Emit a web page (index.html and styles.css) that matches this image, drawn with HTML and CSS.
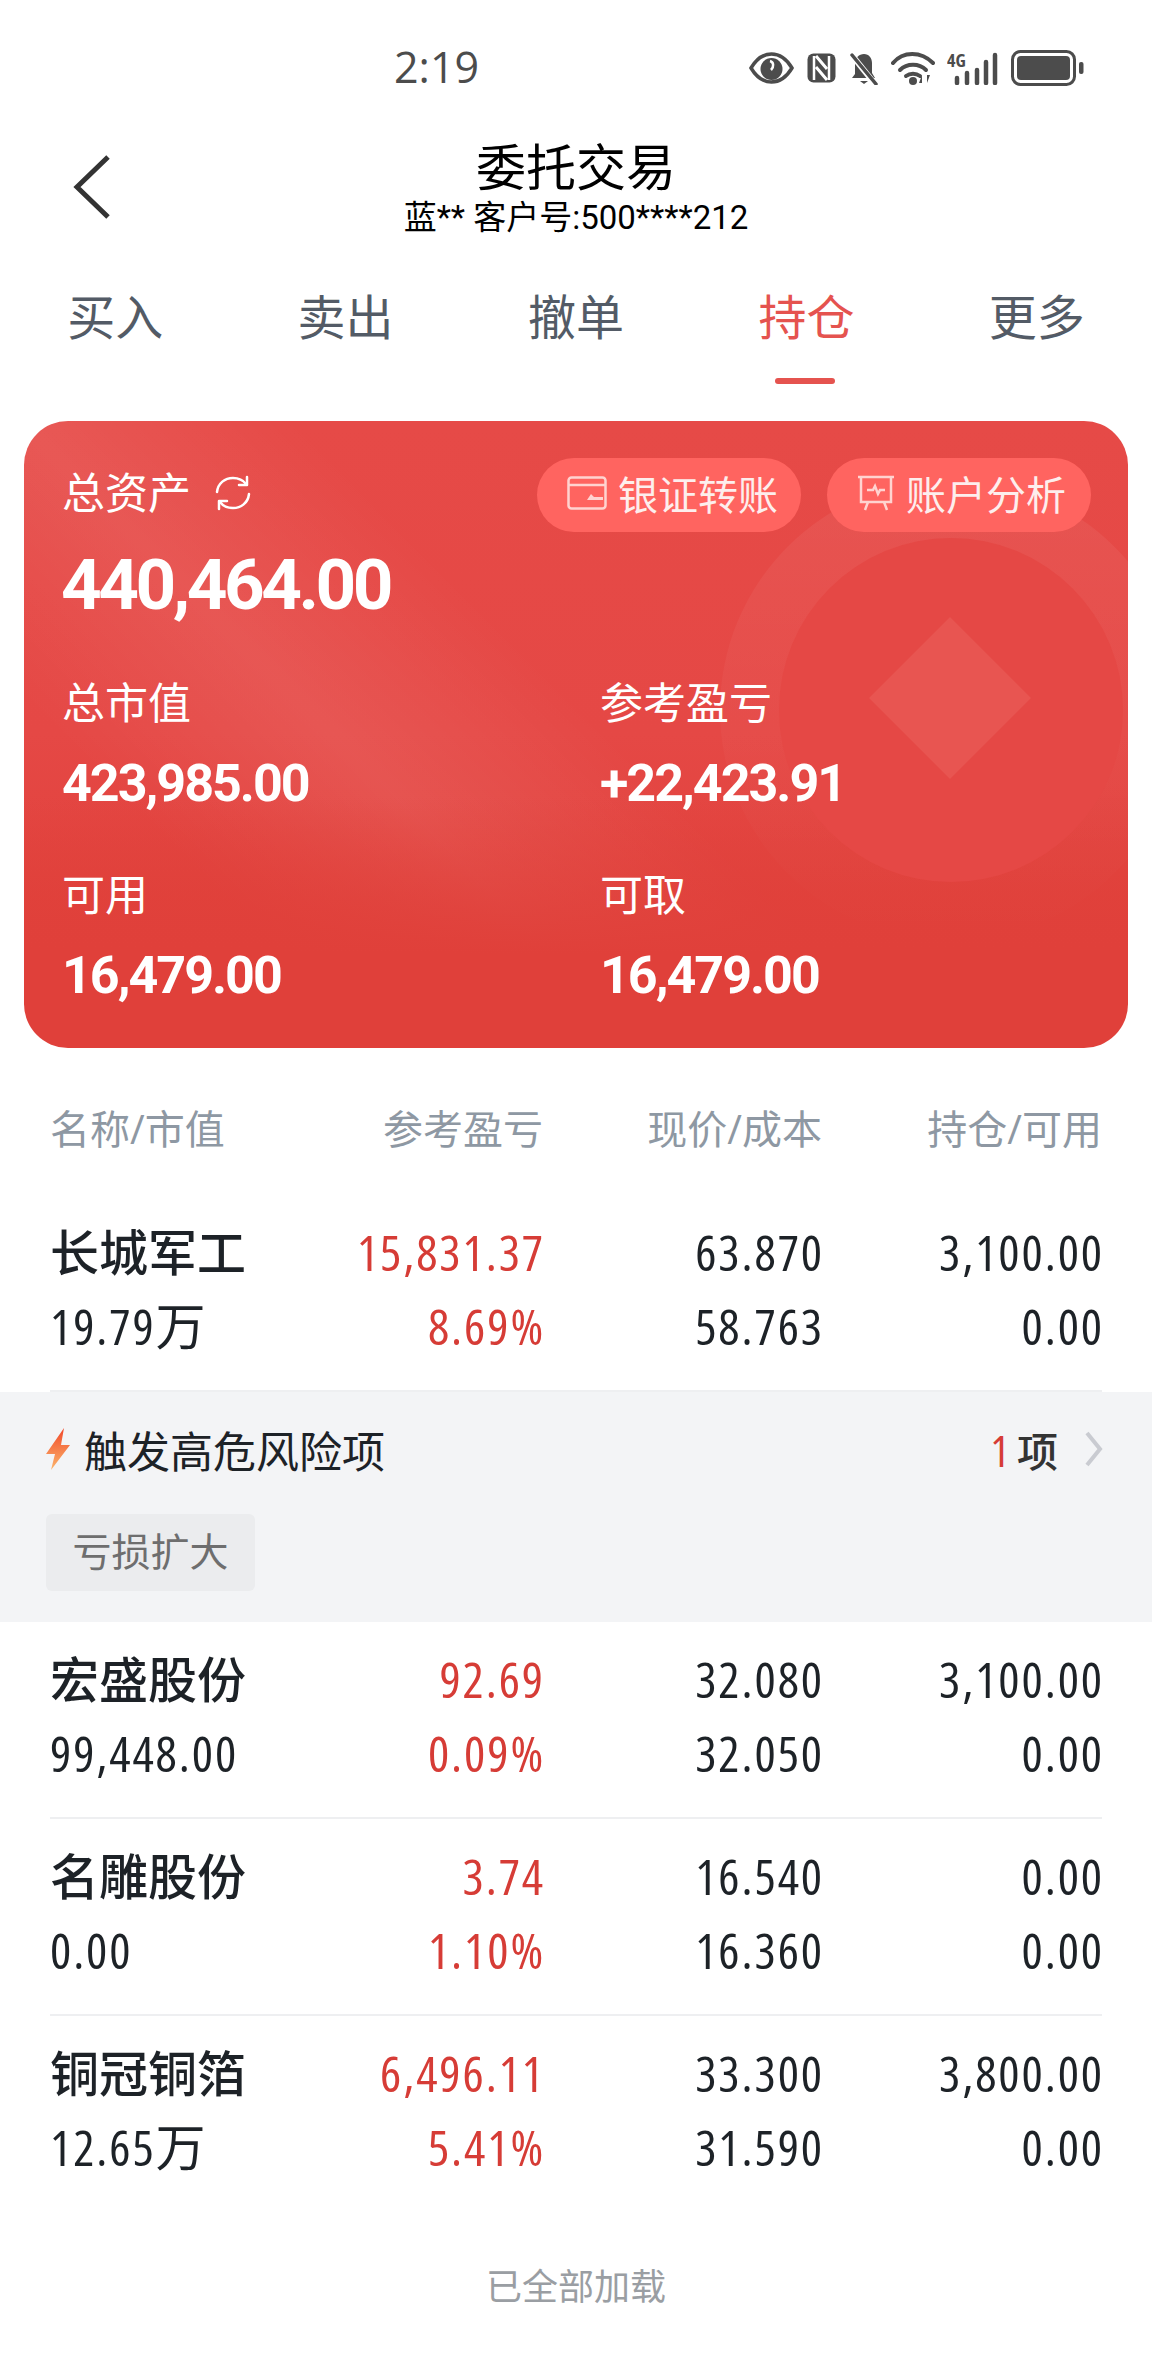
FILE: index.html
```html
<!DOCTYPE html>
<html>
<head>
<meta charset="utf-8">
<link rel="stylesheet" href="styles.css">
</head>
<body>

<div class="status">
  <span class="time">2:19</span>
  <div class="status-icons">
    <svg width="45" height="32" viewBox="0 0 45 32"><path d="M2 16C8 6 14 2 22.500 2S37 6 43 16C37 26 31 30 22.500 30S8 26 2 16Z" fill="none" stroke="#4c4c4c" stroke-width="3.500"/><circle cx="22.500" cy="17" r="11" fill="#4c4c4c"/><path d="M21 9c4 1 4 6 1 9" fill="none" stroke="#fff" stroke-width="2.500"/></svg>
    <svg width="31" height="32" viewBox="0 0 31 32"><rect x="1.500" y="1.500" width="28" height="29" rx="6" fill="#4c4c4c"/><path d="M8 4v24M23 4v24" stroke="#fff" stroke-width="2.500"/><path d="M10 4l11 13M10 15l11 13" stroke="#fff" stroke-width="3"/></svg>
    <svg width="30" height="34" viewBox="0 0 30 34"><path d="M15 3c5 0 8 4 8 9v10l3 5H3l3-4V12c0-5 4-9 9-9Z" fill="#4c4c4c"/><path d="M11 30h8l-4 3Z" fill="#4c4c4c"/><path d="M2 3l24 30" stroke="#fff" stroke-width="6"/><path d="M3 4l24 29" stroke="#4c4c4c" stroke-width="3.500" stroke-linecap="round"/></svg>
    <svg width="44" height="34" viewBox="0 0 44 34"><g fill="none" stroke="#4c4c4c" stroke-width="4" stroke-linecap="round"><path d="M2 12C12 0 30 0 42 12"/><path d="M9 19c7-7 19-7 26 0"/><path d="M15 25c4-3 10-3 14 0"/></g><circle cx="22" cy="30" r="4" fill="#4c4c4c"/><path d="M31 32v-8l-3 8ZM36 24v8l3-8Z" fill="#4c4c4c"/></svg>
    <svg class="net" width="52" height="42" viewBox="0 -8 52 42"><text x="0" y="16" class="net-text">4G</text><g stroke="#4c4c4c" stroke-width="4.500" stroke-linecap="round"><path d="M10 27v5M20 22v10M30 19v13M39 11v21M48 4v28"/></g></svg>
    <svg width="73" height="36" viewBox="0 0 73 36"><rect x="1.500" y="1.500" width="62" height="33" rx="8" fill="none" stroke="#4c4c4c" stroke-width="3"/><rect x="6" y="6" width="53" height="24" rx="4" fill="#4c4c4c"/><rect x="68" y="12" width="4.500" height="12" rx="2" fill="#4c4c4c"/></svg>
  </div>
</div>

<div class="nav">
  <svg class="back" width="38" height="66" viewBox="0 0 38 66"><path d="M35 3L4 33L35 63" fill="none" stroke="#333" stroke-width="5"/></svg>
  <div class="nav-title">
    <div class="title">委托交易</div>
    <div class="subtitle">蓝** 客户号:500****212</div>
  </div>
</div>

<div class="tabs">
  <div class="tab">买入</div>
  <div class="tab">卖出</div>
  <div class="tab">撤单</div>
  <div class="tab active">持仓</div>
  <div class="tab">更多</div>
</div>

<div class="card">
  <svg class="coin" width="1104" height="627" viewBox="0 0 1104 627">
    <defs>
      <linearGradient id="ring" x1="0" y1="0" x2="0" y2="1">
        <stop offset="0" stop-color="#fff" stop-opacity="0.06"/>
        <stop offset="1" stop-color="#fff" stop-opacity="0"/>
      </linearGradient>
    </defs>
    <circle cx="927" cy="289" r="231" fill="url(#ring)"/>
    <circle cx="927" cy="289" r="172" fill="#e54845"/>
    <path d="M926 196L1007 277L926 358L845 277Z" fill="#e85551"/>
  </svg>

  <div class="card-top">
    <div class="card-label total-label">总资产
      <svg width="38" height="36" viewBox="0 0 38 36"><g fill="none" stroke="#fff" stroke-width="2.500" stroke-linecap="round" stroke-linejoin="round"><path d="M3 17C4 8 11 3 19 3c6 0 10 2 13 6"/><path d="M35 19c-1 9-8 14-16 14-6 0-10-2-13-6"/><path d="M33 2v8h-8"/><path d="M5 34v-8h8"/></g></svg>
    </div>
    <div class="pills">
      <div class="pill">
        <svg width="40" height="34" viewBox="0 0 40 34"><g fill="none" stroke="#ffd3d0" stroke-width="2.500"><rect x="1.500" y="1.500" width="37" height="31" rx="3"/><path d="M1.500 9h37"/></g><path d="M20 24h16v-3h-9l-3-3Z" fill="#ffd3d0"/></svg>
        银证转账
      </div>
      <div class="pill">
        <svg width="38" height="38" viewBox="0 0 38 38"><g fill="none" stroke="#ffd3d0" stroke-width="2.500"><path d="M1 3h36"/><path d="M4 3v25h30V3"/><path d="M11 28l-3 8M27 28l3 8"/><path d="M10 16h6l2-4 3 8 2-4h5"/></g></svg>
        账户分析
      </div>
    </div>
  </div>

  <div class="total">440,464.00</div>

  <div class="card-grid">
    <div>
      <div class="card-label">总市值</div>
      <div class="card-value">423,985.00</div>
    </div>
    <div>
      <div class="card-label">参考盈亏</div>
      <div class="card-value">+22,423.91</div>
    </div>
    <div>
      <div class="card-label">可用</div>
      <div class="card-value">16,479.00</div>
    </div>
    <div>
      <div class="card-label">可取</div>
      <div class="card-value">16,479.00</div>
    </div>
  </div>
</div>

<div class="table-head">
  <div>名称/市值</div>
  <div class="r">参考盈亏</div>
  <div class="r">现价/成本</div>
  <div class="r">持仓/可用</div>
</div>

<div class="row">
  <div class="name">长城军工</div>
  <div class="num r red">15,831.37</div>
  <div class="num r">63.870</div>
  <div class="num r">3,100.00</div>
  <div class="num">19.79万</div>
  <div class="num r red">8.69%</div>
  <div class="num r">58.763</div>
  <div class="num r">0.00</div>
</div>

<div class="risk">
  <div class="risk-head">
    <svg width="24" height="42" viewBox="0 0 24 42">
      <defs>
        <linearGradient id="bolt" x1="0" y1="0" x2="0" y2="1">
          <stop offset="0" stop-color="#f1492a"/>
          <stop offset="1" stop-color="#fbb56c"/>
        </linearGradient>
      </defs>
      <path d="M18 0L0 26H9L5 42L24 17H15Z" fill="url(#bolt)"/>
    </svg>
    <span class="risk-title">触发高危风险项</span>
    <span class="risk-count"><span class="red num">1</span>项</span>
    <svg class="risk-arrow" width="18" height="36" viewBox="0 0 18 36"><path d="M2 2L15 18L2 34" fill="none" stroke="#c9cbd1" stroke-width="4"/></svg>
  </div>
  <div class="tag">亏损扩大</div>
</div>

<div class="row">
  <div class="name">宏盛股份</div>
  <div class="num r red">92.69</div>
  <div class="num r">32.080</div>
  <div class="num r">3,100.00</div>
  <div class="num">99,448.00</div>
  <div class="num r red">0.09%</div>
  <div class="num r">32.050</div>
  <div class="num r">0.00</div>
</div>

<div class="row">
  <div class="name">名雕股份</div>
  <div class="num r red">3.74</div>
  <div class="num r">16.540</div>
  <div class="num r">0.00</div>
  <div class="num">0.00</div>
  <div class="num r red">1.10%</div>
  <div class="num r">16.360</div>
  <div class="num r">0.00</div>
</div>

<div class="row last">
  <div class="name">铜冠铜箔</div>
  <div class="num r red">6,496.11</div>
  <div class="num r">33.300</div>
  <div class="num r">3,800.00</div>
  <div class="num">12.65万</div>
  <div class="num r red">5.41%</div>
  <div class="num r">31.590</div>
  <div class="num r">0.00</div>
</div>

<div class="footer">已全部加载</div>

</body>
</html>
```

FILE: styles.css
```css
* {
  box-sizing: border-box;
}

body {
  margin: 0;
  background: #fff;
  font-family: "Open Sans", "Noto Sans CJK SC", sans-serif;
  color: #1d2227;
}

/* status bar */
.status {
  height: 136px;
  display: flex;
  align-items: center;
  padding-left: 394px;
}

.time {
  font-size: 43px;
  line-height: 60px;
  margin-top: -2px;
  color: #4c4c4c;
}

.status-icons {
  margin-left: auto;
  padding-right: 68px;
  display: flex;
  align-items: center;
  gap: 12px;
}

.net {
  margin-top: -8px;
}

.net-text {
  font-size: 18px;
  font-weight: 700;
  font-stretch: 75%;
  fill: #4c4c4c;
}

/* header */
.nav {
  display: grid;
  grid-template-columns: 1fr auto 1fr;
  align-items: center;
  padding-top: 3px;
}

.back {
  margin-left: 73px;
}

.nav-title {
  text-align: center;
}

.title {
  font-size: 50px;
  line-height: 56px;
  color: #000;
}

.subtitle {
  font-family: Roboto, "Noto Sans CJK SC", sans-serif;
  font-size: 33px;
  line-height: 34px;
  margin-top: 6px;
  color: #000;
}

.tabs {
  display: flex;
  margin-top: 47px;
}

.tab {
  flex: 1;
  text-align: center;
  font-size: 48px;
  line-height: 70px;
  color: #535b66;
  padding-bottom: 32px;
}

.tab.active {
  color: #e5534f;
  position: relative;
}

.tab.active::after {
  content: "";
  position: absolute;
  left: 84px;
  top: 96px;
  width: 60px;
  height: 6px;
  border-radius: 3px;
  background: #e5534f;
}

/* assets card */
.card {
  position: relative;
  margin: 37px 24px 0;
  height: 627px;
  padding: 37px 37px 0 38px;
  border-radius: 44px;
  overflow: hidden;
  color: #fff;
  background:
    linear-gradient(180deg, rgba(224,64,58,0) 60%, #e0403a 85%),
    linear-gradient(45deg, rgba(255,255,255,0) 20%, rgba(255,255,255,0.08) 36%, rgba(255,255,255,0) 52%),
    linear-gradient(180deg, #e64a47 0%, #e54845 50%, #e0403a 85%);
}

.coin {
  position: absolute;
  left: 0;
  top: 0;
}

.card-top {
  position: relative;
  height: 74px;
  display: flex;
  justify-content: space-between;
  align-items: center;
}

.total-label {
  display: flex;
  align-items: center;
  gap: 23px;
  padding-bottom: 4px;
}

.pills {
  display: flex;
  gap: 26px;
}

.pill {
  height: 74px;
  width: 264px;
  padding: 0 0 4px 30px;
  border-radius: 37px;
  background: #ff6460;
  display: flex;
  align-items: center;
  gap: 11px;
  font-size: 40px;
  color: #fdeeed;
}

.card-label {
  font-size: 43px;
  line-height: 50px;
}

.total {
  position: relative;
  margin: 13px 0 0 -1px;
  font-family: Roboto, sans-serif;
  font-size: 71px;
  line-height: 80px;
  font-weight: 700;
  letter-spacing: -3.500px;
}

.card-grid {
  position: relative;
  display: grid;
  grid-template-columns: 538px 1fr;
  row-gap: 56px;
  margin-top: 53px;
}

.card-value {
  margin-top: 26px;
  font-family: Roboto, sans-serif;
  font-size: 52px;
  line-height: 60px;
  font-weight: 700;
  letter-spacing: -2px;
}

/* holdings table */
.table-head,
.row {
  display: grid;
  grid-template-columns: 273px 220px 279px 280px;
  align-content: start;
  margin: 0 50px;
}

.table-head {
  padding-top: 51px;
  height: 147px;
  font-size: 40px;
  line-height: 60px;
  color: #8e98a3;
}

.r {
  text-align: right;
}

.row {
  padding: 20px 0 0;
  height: 197px;
  border-bottom: 2px solid #eeeff1;
}

.row.last {
  border-bottom: none;
}

.row > div {
  line-height: 74px;
  white-space: nowrap;
}

.name {
  font-size: 49px;
  font-weight: 500;
}

.num {
  font-size: 50px;
  font-stretch: 75%;
  letter-spacing: 1.900px;
}

.num.r {
  margin-right: -2px;
}

.red {
  color: #d63c36;
}

.risk {
  background: #f3f4f6;
  height: 230px;
  padding: 27px 49px 0 46px;
}

.risk-head {
  display: flex;
  align-items: center;
  height: 60px;
}

.risk-title {
  margin-left: 14px;
  font-size: 43px;
  color: #1d2227;
}

.risk-count {
  margin-left: auto;
  font-size: 41px;
  font-weight: 500;
  color: #333;
}

.risk-count .num {
  font-size: 44px;
  font-weight: 400;
  margin-right: 6px;
}

.risk-arrow {
  margin-left: 27px;
}

.tag {
  margin-top: 35px;
  width: 209px;
  height: 77px;
  line-height: 74px;
  text-align: center;
  border-radius: 6px;
  background: #ebecee;
  font-size: 39px;
  color: #6e6e6e;
}

.footer {
  margin-top: 49px;
  text-align: center;
  font-size: 36px;
  line-height: 50px;
  color: #9a9ea3;
}
```
